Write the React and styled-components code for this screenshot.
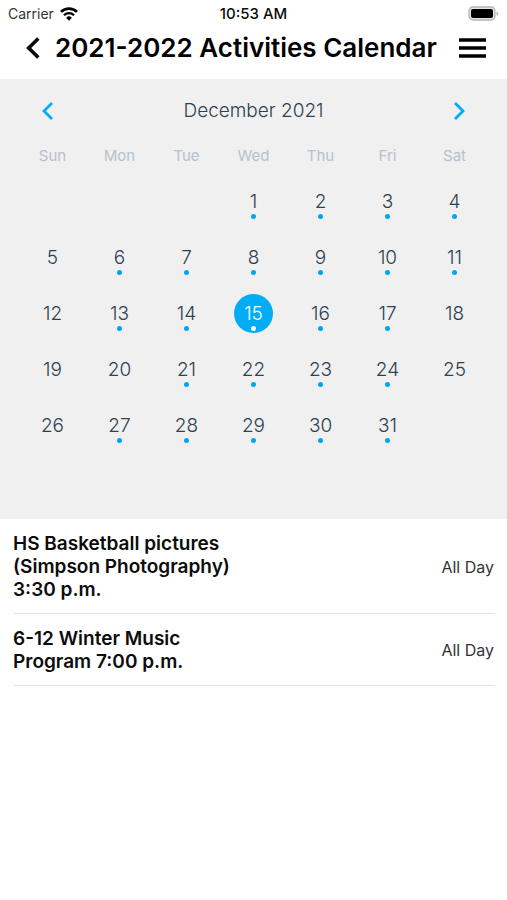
import React from "react";
import styled, { createGlobalStyle } from "styled-components";

const Global = createGlobalStyle`
  * { box-sizing: border-box; }
  body {
    margin: 0;
    background: #fff;
    color: #0c0c0c;
    font-family: Inter, Roboto, "Liberation Sans", sans-serif;
  }
  button {
    border: 0;
    padding: 0;
    background: none;
    font: inherit;
    color: inherit;
    cursor: pointer;
  }
`;

const Screen = styled.div`
  min-height: 100vh;
`;

const StatusBar = styled.div`
  display: grid;
  grid-template-columns: 1fr auto 1fr;
  align-items: center;
  height: 27px;
  padding: 0 8px;
  font-size: 14px;
`;

const Carrier = styled.span`
  display: flex;
  align-items: center;
  gap: 6px;
  color: #333;
`;

const Clock = styled.time`
  font-size: 15px;
  font-weight: 500;
`;

const Battery = styled.svg`
  justify-self: end;
`;

const Header = styled.header`
  display: flex;
  align-items: center;
  height: 52px;
  padding: 0 21px 10px;
`;

const IconButton = styled.button`
  display: flex;
  flex: none;
  align-items: center;
  justify-content: center;
  width: ${(p) => p.$width}px;
  height: 32px;
`;

const Title = styled.h1`
  flex: 1;
  margin: 0 0 0 10px;
  font-size: 26px;
  line-height: 32px;
  font-weight: 600;
  white-space: nowrap;
  color: #000;
`;

const Calendar = styled.section`
  padding: 0 19px 66px;
  background: #f0f0f0;
`;

const MonthBar = styled.div`
  display: flex;
  align-items: center;
  justify-content: space-between;
  height: 63px;
  padding: 0 13px;
  color: #00adf5;
`;

const MonthName = styled.h2`
  margin: 0;
  font-size: 19px;
  font-weight: 300;
  color: #2d4150;
`;

const Month = styled.table`
  width: 100%;
  table-layout: fixed;
  border-collapse: collapse;
`;

const Weekday = styled.th`
  height: 31px;
  padding: 0 0 4px;
  font-size: 15px;
  font-weight: 400;
  color: #b6c1cd;
`;

const DayCell = styled.td`
  height: 56px;
  padding: 0;
`;

const Day = styled.button`
  display: flex;
  flex-direction: column;
  align-items: center;
  width: 39px;
  height: 39px;
  margin: 0 auto;
  padding-top: 8px;
  border-radius: 50%;
  background: ${(p) => (p.$selected ? "#00adf5" : "transparent")};
  color: ${(p) => (p.$selected ? "#fff" : "#2d4150")};
  font-size: 19px;
  line-height: 24px;
  font-weight: 300;
`;

const Dot = styled.span`
  width: 5px;
  height: 5px;
  border-radius: 50%;
  background: ${(p) => (p.$selected ? "#fff" : "#00a5ee")};
`;

const Events = styled.ul`
  margin: 0;
  padding: 0 13px;
  list-style: none;
`;

const Event = styled.li`
  display: flex;
  align-items: center;
  justify-content: space-between;
  padding: 13px 0 12px;
  border-bottom: 1px solid #e2e2e2;
`;

const EventName = styled.h3`
  width: 50%;
  margin: 0;
  font-size: 19px;
  line-height: 23px;
  font-weight: 600;
`;

const EventTime = styled.span`
  font-size: 16px;
  font-weight: 400;
  color: #333;
`;

const Chevron = ({ width, height, stroke, forward }) => (
  <svg width={width} height={height} viewBox="0 0 12 20" fill="none" aria-hidden="true">
    <path
      d={forward ? "M2 2l8 8-8 8" : "M10 2l-8 8 8 8"}
      stroke="currentColor"
      strokeWidth={stroke}
    />
  </svg>
);

const weekdays = ["Sun", "Mon", "Tue", "Wed", "Thu", "Fri", "Sat"];
const weeks = [
  [null, null, null, 1, 2, 3, 4],
  [5, 6, 7, 8, 9, 10, 11],
  [12, 13, 14, 15, 16, 17, 18],
  [19, 20, 21, 22, 23, 24, 25],
  [26, 27, 28, 29, 30, 31, null],
];
const daysWithoutEvents = [5, 12, 18, 19, 20, 25, 26];
const selectedDay = 15;
const events = [
  "HS Basketball pictures (Simpson Photography) 3:30 p.m.",
  "6-12 Winter Music Program 7:00 p.m.",
];

export default function App() {
  return (
    <Screen>
      <Global />
      <StatusBar>
        <Carrier>
          Carrier
          <svg width="18" height="14" viewBox="0 0 18 14" fill="none" aria-hidden="true">
            <path d="M1 4.9a11.3 11.3 0 0 1 16 0" stroke="#000" strokeWidth="2.6" />
            <path d="M4 8.2a7.1 7.1 0 0 1 10 0" stroke="#000" strokeWidth="2.3" />
            <path d="M9 13.8l-2.9-3a4.1 4.1 0 0 1 5.8 0z" fill="#000" />
          </svg>
        </Carrier>
        <Clock>10:53 AM</Clock>
        <Battery width="31" height="15" viewBox="0 0 31 15" role="img" aria-label="Battery full">
          <rect x="1" y="1" width="26" height="13" rx="4" fill="#e4e4e4" stroke="#b5b5b5" strokeWidth="1.3" />
          <rect x="3" y="3" width="22" height="9" rx="2" fill="#000" />
          <path d="M28.6 5.2c2.2.8 2.2 3.8 0 4.6z" fill="#b5b5b5" />
        </Battery>
      </StatusBar>

      <Header>
        <IconButton type="button" $width={24} aria-label="Back">
          <Chevron width={15} height={24} stroke={3} />
        </IconButton>
        <Title>2021-2022 Activities Calendar</Title>
        <IconButton type="button" $width={27} aria-label="Menu">
          <svg width="27" height="22" viewBox="0 0 27 22" aria-hidden="true">
            <path d="M0 3h27M0 11h27M0 19h27" stroke="#000" strokeWidth="3.6" />
          </svg>
        </IconButton>
      </Header>

      <Calendar>
        <MonthBar>
          <IconButton type="button" $width={32} aria-label="Previous month">
            <Chevron width={12} height={20} stroke={2.8} />
          </IconButton>
          <MonthName>December 2021</MonthName>
          <IconButton type="button" $width={32} aria-label="Next month">
            <Chevron width={12} height={20} stroke={2.8} forward />
          </IconButton>
        </MonthBar>
        <Month aria-label="December 2021">
          <thead>
            <tr>
              {weekdays.map((name) => (
                <Weekday key={name} scope="col">{name}</Weekday>
              ))}
            </tr>
          </thead>
          <tbody>
            {weeks.map((week, row) => (
              <tr key={row}>
                {week.map((day, column) => (
                  <DayCell key={column}>
                    {day && (
                      <Day type="button" $selected={day === selectedDay} aria-pressed={day === selectedDay}>
                        {day}
                        {!daysWithoutEvents.includes(day) && <Dot $selected={day === selectedDay} />}
                      </Day>
                    )}
                  </DayCell>
                ))}
              </tr>
            ))}
          </tbody>
        </Month>
      </Calendar>

      <Events>
        {events.map((name) => (
          <Event key={name}>
            <EventName>{name}</EventName>
            <EventTime>All Day</EventTime>
          </Event>
        ))}
      </Events>
    </Screen>
  );
}
